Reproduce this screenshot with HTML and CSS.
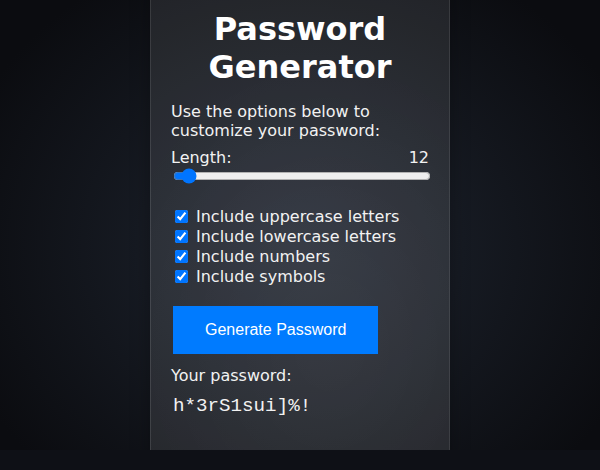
FILE: index.html
```html
<!DOCTYPE html>
<html lang="en">
<head>
<meta charset="utf-8">
<title>Password Generator</title>
<link rel="stylesheet" href="styles.css">
</head>
<body>
<div class="page">
  <div class="card">
    <h1 class="title">Password Generator</h1>
    <p class="intro">Use the options below to customize your password:</p>
    <div class="length-row">
      <span>Length:</span>
      <span>12</span>
    </div>
    <input class="slider" type="range" min="8" max="128" value="12">
    <div class="options">
      <label class="option"><input type="checkbox" checked><span>Include uppercase letters</span></label>
      <label class="option"><input type="checkbox" checked><span>Include lowercase letters</span></label>
      <label class="option"><input type="checkbox" checked><span>Include numbers</span></label>
      <label class="option"><input type="checkbox" checked><span>Include symbols</span></label>
    </div>
    <button class="generate" type="button">Generate Password</button>
    <p class="result-label">Your password:</p>
    <div class="result">h*3rS1sui]%!</div>
  </div>
</div>
</body>
</html>
```
FILE: styles.css
```css
html {
  background: #0e1016;
}
body {
  margin: 0;
  font-family: "DejaVu Sans", sans-serif;
  color: #f2f2f2;
}
.page {
  height: 450px;
  display: flex;
  justify-content: center;
  align-items: center;
  background: radial-gradient(ellipse 60% 70% at 50% 55%, #1f2430 0%, #161a22 45%, #0b0c10 100%);
}
.card {
  box-sizing: border-box;
  width: 300px;
  flex-shrink: 0;
  padding: 20px;
  border: 1px solid rgba(255, 255, 255, 0.1);
  border-radius: 10px;
  background: radial-gradient(ellipse 80% 60% at 60% 75%, rgba(255, 255, 255, 0.13) 0%, rgba(255, 255, 255, 0.09) 100%);
  box-shadow: 0 4px 20px rgba(0, 0, 0, 0.3);
}
.title {
  margin: 9px 0 16px;
  font-size: 32px;
  font-weight: bold;
  text-align: center;
  color: #ffffff;
}
.intro {
  margin: 0 0 8px;
  font-size: 16px;
}
.length-row {
  display: flex;
  justify-content: space-between;
  font-size: 16px;
}
.slider {
  display: block;
  width: 100%;
  margin: 1px 2px 2px;
}
.options {
  margin-top: 22px;
  display: flex;
  flex-direction: column;
}
.option {
  display: flex;
  align-items: center;
  height: 20px;
  font-size: 16px;
}
.option input {
  margin: 0 8px 0 4px;
}
.generate {
  display: block;
  margin: 20px 2px 0;
  padding: 15px 32px;
  border: none;
  background: #007bff;
  color: #ffffff;
  font-family: "Liberation Sans", Arial, sans-serif;
  font-size: 16px;
  line-height: 18px;
}
.result-label {
  margin: 12px 0 0;
  font-size: 16px;
}
.result {
  margin: 10px 0 32px;
  padding-left: 2px;
  font-family: "Liberation Mono", monospace;
  font-size: 19.2px;
}
```
